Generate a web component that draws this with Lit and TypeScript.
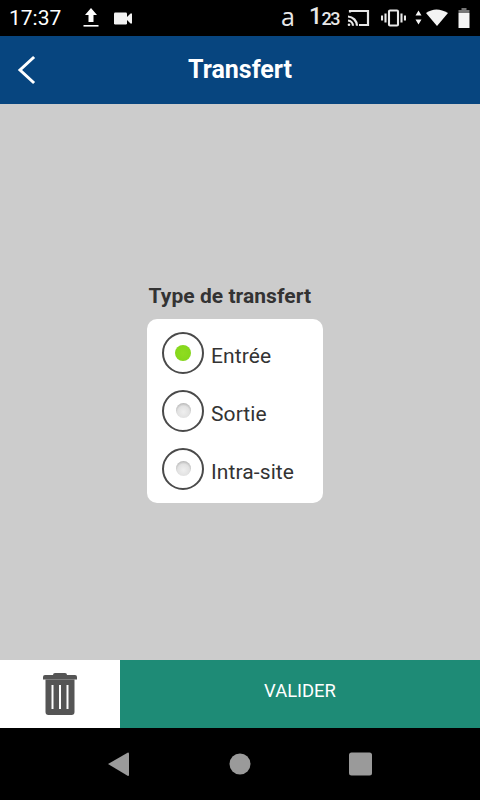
import { LitElement, html, css } from "lit";
import { customElement, state } from "lit/decorators.js";

@customElement("app-root")
export class AppRoot extends LitElement {
  @state() selected = "Entrée";

  static styles = css`
    :host { display: flex; flex-direction: column; width: 480px; height: 800px; font-family: Roboto, "Liberation Sans", sans-serif; overflow: hidden; }
    .status { height: 36px; background: #000; color: #fff; display: flex; align-items: center; flex: none; }
    .time { font-size: 21px; margin-left: 9px; width: 72px; }
    .st-left { display: flex; align-items: center; }
    .st-left svg { display: block; }
    .upload { width: 20px; height: 22px; margin-right: 13px; }
    .video { width: 18px; height: 13px; }
    .st-right { margin-left: auto; display: flex; align-items: center; }
    .st-right svg { display: block; flex: none; }
    .a { font-size: 25px; line-height: 36px; width: 16px; margin-right: 12px; color: #e8e8e8; font-family: "Open Sans", Roboto, sans-serif; transform: translateY(-2px); }
    .num { display: flex; align-items: baseline; width: 32px; margin-right: 6px; color: #e8e8e8; line-height: 36px; letter-spacing: -1.5px; font-weight: 500; }
    .num b { font-size: 23px; font-weight: 500; margin-right: 1px; transform: translateY(-1px); }
    .num span { font-size: 18px; }
    .appbar { height: 68px; background: #07457f; color: #fff; display: flex; align-items: center; justify-content: center; position: relative; flex: none; }
    .appbar h1 { margin: 0 0 2px; font-size: 25px; font-weight: 700; }
    .back { position: absolute; left: 16px; top: 19px; width: 22px; height: 30px; }
    .main { flex: 1; background: #ccc; display: flex; flex-direction: column; align-items: flex-start; padding: 180px 0 0 147px; box-sizing: border-box; }
    .title { font-size: 21px; font-weight: 700; color: #333; line-height: 24px; margin: 0 0 11px 1.5px; letter-spacing: 0.05px; }
    .card { width: 176px; height: 184px; box-sizing: border-box; background: #fff; border-radius: 10px; padding: 13px 15px; display: flex; flex-direction: column; gap: 16px; }
    .row { display: flex; align-items: center; height: 42px; gap: 7px; font-size: 21px; color: #333; cursor: pointer; letter-spacing: 0.1px; }
    .row span { position: relative; top: 3px; }
    .radio { width: 42px; height: 42px; box-sizing: border-box; border: 2px solid #4a4a4a; border-radius: 50%; display: flex; align-items: center; justify-content: center; flex: none; }
    .dot { width: 15px; height: 15px; margin-bottom: 1px; border-radius: 50%; background: radial-gradient(circle at 50% 60%, #efefef 0%, #e2e2e2 50%, #8f8f8f 100%); }
    .on .dot { width: 16px; height: 16px; background: radial-gradient(circle at 50% 50%, #8fdc20 0%, #86d81c 65%, #7fb93a 100%); }
    .bottom { height: 68px; display: flex; flex: none; }
    .trash { width: 120px; background: #fff; display: flex; align-items: center; justify-content: center; }
    .trash svg { width: 34px; height: 42px; display: block; }
    .ok { flex: 1; background: #1e8b76; color: #fff; font-size: 18.4px; display: flex; align-items: center; justify-content: center; border: 0; font-family: inherit; padding: 0 0 8px; }
    .nav { height: 72px; background: #000; flex: none; position: relative; }
    .nav svg { position: absolute; top: 24px; width: 24px; height: 24px; fill: #9a9a9a; }
    .n1 { left: 107px; }
    .n2 { left: 228px; }
    .n3 { left: 348px; }
  `;

  render() {
    const opts = ["Entrée", "Sortie", "Intra-site"];
    return html`
      <div class="status">
        <div class="time">17:37</div>
        <div class="st-left">
          <svg class="upload" viewBox="0 0 20 22" fill="#fff">
            <path d="M10 1 L16 8 H12.5 V15 H7.5 V8 H4 Z" />
            <rect x="2.5" y="18" width="15" height="1.6" />
          </svg>
          <svg class="video" viewBox="0 0 18 13" fill="#f2f2f2">
            <rect x="0" y="0.5" width="13" height="12" rx="1.2" />
            <path d="M13 5 L16.5 1.5 H18 V11.5 H16.5 L13 8 Z" />
          </svg>
        </div>
        <div class="st-right">
          <div class="a">a</div>
          <div class="num"><b>1</b><span>23</span></div>
          <svg width="23" height="18" viewBox="0 0 23 18" style="margin-right:11px" fill="none" stroke="#e8e8e8" stroke-width="2.2">
            <path d="M3 3.5 V2 H21 V16 H12" />
            <path d="M1 7.5 A9.5 9.5 0 0 1 10 16.8" />
            <path d="M1 11.5 A5.5 5.5 0 0 1 6 16.8" />
            <circle cx="2" cy="15.7" r="1.3" fill="#e8e8e8" stroke="none" />
          </svg>
          <svg width="25" height="18" viewBox="0 0 25 18" style="margin-right:9px" fill="none" stroke="#e8e8e8" stroke-width="2.1">
            <rect x="8" y="1.5" width="9" height="15" rx="1" />
            <path d="M4.5 4.5 V13.5 M20.5 4.5 V13.5 M1 6.5 V11.5 M24 6.5 V11.5" />
          </svg>
          <svg width="33" height="18" viewBox="0 0 33 18" style="margin-right:10px" fill="#f4f4f4">
            <path d="M3.5 1.5 L6.5 6.5 H0.5 Z M0.5 10.5 H6.5 L3.5 15.5 Z" />
            <path d="M11 4 Q21 -3 33 4 L22 17 Z" />
          </svg>
          <svg width="12" height="20" viewBox="0 0 12 20" style="margin-right:10px">
            <rect x="3.5" y="0" width="5" height="2.5" fill="#777" />
            <rect x="0.5" y="2" width="11" height="3" fill="#777" />
            <rect x="0.5" y="5" width="11" height="15" fill="#f4f4f4" />
          </svg>
        </div>
      </div>
      <div class="appbar">
        <svg class="back" viewBox="0 0 22 30" fill="none" stroke="#fff" stroke-width="3" stroke-linecap="square">
          <path d="M17 3 L4 15 L17 27" />
        </svg>
        <h1>Transfert</h1>
      </div>
      <div class="main">
        <div class="title">Type de transfert</div>
        <div class="card">
          ${opts.map(
            (o) => html`<div class="row ${o === this.selected ? "on" : ""}" @click=${() => (this.selected = o)}>
              <div class="radio"><div class="dot"></div></div>
              <span>${o}</span>
            </div>`
          )}
        </div>
      </div>
      <div class="bottom">
        <div class="trash">
          <svg viewBox="0 0 34 42" fill="#555">
            <path d="M12 0 H22 Q24 0 24 2 H32 Q34 2 34 4 V6.5 H0 V4 Q0 2 2 2 H10 Q10 0 12 0 Z" />
            <path fill-rule="evenodd" d="M2.5 6.5 H31.5 V39 Q31.5 42 28.5 42 H5.5 Q2.5 42 2.5 39 Z M8.5 12 V36 H10.5 V12 Z M16 12 V36 H18 V12 Z M23.5 12 V36 H25.5 V12 Z" />
          </svg>
        </div>
        <button class="ok">VALIDER</button>
      </div>
      <div class="nav">
        <svg class="n1" viewBox="0 0 24 24"><path d="M1 12 L21 0.5 Q22 0.5 22 1.5 V23 Q22 24 21 24 Z" /></svg>
        <svg class="n2" viewBox="0 0 24 24"><circle cx="12" cy="12" r="10.5" /></svg>
        <svg class="n3" viewBox="0 0 24 24"><rect x="1" y="0.5" width="23" height="23" rx="2.5" /></svg>
      </div>
    `;
  }
}
